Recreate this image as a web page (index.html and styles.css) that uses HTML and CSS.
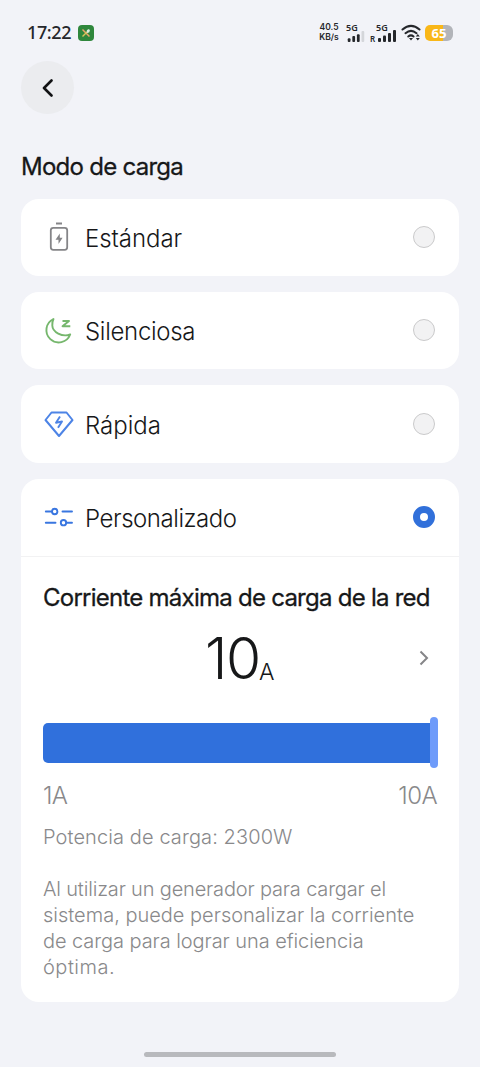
FILE: index.html
```html
<!DOCTYPE html>
<html lang="es">
<head>
<meta charset="utf-8">
<meta name="viewport" content="width=device-width, initial-scale=1">
<title>Modo de carga</title>
<link rel="stylesheet" href="styles.css">
</head>
<body>
<div class="screen">
  <header class="status">
    <span class="clock">17:22</span>
    <svg class="app-badge" viewBox="0 0 16 16"><rect width="16" height="16" rx="4" fill="#2f873c"/><path d="M4.5 4.5l7 7" stroke="#e9a36a" stroke-width="1.5"/><path d="M4.5 11.5L9 7" stroke="#d8c45a" stroke-width="1.5"/><path d="M8.5 7.5L9 5l2-1 .8 1.2-.4 2-2 .8z" fill="#dceee0"/></svg>
    <div class="speed"><span>40.5</span><span>KB/s</span></div>
    <div class="signal first"><span>5G</span><svg width="18" height="12" viewBox="0 0 18 12"><g fill="#25272b"><rect y="8" width="3" height="4" rx="1"/><rect x="5" y="5.500" width="3" height="6.500" rx="1"/><rect x="10" y="3.500" width="3" height="8.500" rx="1"/></g><rect x="15" width="3" height="12" rx="1" fill="#d4d6da"/></svg></div>
    <div class="signal second"><span>5G</span><div class="roam"><b>R</b><svg width="18" height="12" viewBox="0 0 18 12"><g fill="#25272b"><rect y="8" width="3" height="4" rx="1"/><rect x="5" y="5.500" width="3" height="6.500" rx="1"/><rect x="10" y="3" width="3" height="9" rx="1"/><rect x="15" width="3" height="12" rx="1"/></g></svg></div></div>
    <svg class="wifi" viewBox="0 0 20 18"><g fill="none" stroke="#25272b" stroke-width="2" stroke-linecap="round"><path d="M1.500 5.500Q10-1.800 18.500 5.500M4.500 9.200Q10 4.600 15.500 9.200M7.300 12.500Q10 10.200 12.500 12.500"/></g><path d="M8 14h4l-2 2.500zM14.800 12.500l2-2.500 2 2.500zM14.800 14l2 2.500 2-2.500z" fill="#25272b"/></svg>
    <div class="battery">65</div>
  </header>
  <button class="back" aria-label="Atrás"><svg width="12" height="18" viewBox="0 0 12 18"><path d="M9.500 1.500L2 9l7.500 7.500" fill="none" stroke="#111214" stroke-width="2.600" stroke-linecap="round" stroke-linejoin="round"/></svg></button>
  <h1 class="title">Modo de carga</h1>
  <main class="options">
    <section class="card"><div class="option">
      <svg class="icon" viewBox="0 0 30 30" fill="none" stroke="#858588"><path d="M12 1.500h6" stroke-width="2"/><rect x="6.800" y="5.800" width="16.400" height="22" rx="2.500" stroke-width="1.800"/><path d="M15.800 11.500l-4.300 6.200h3v4.300l4.100-6.200h-2.800z" fill="#858588" stroke="none"/></svg>
      <span class="label standard">Estándar</span><i class="radio"></i></div></section>
    <section class="card"><div class="option">
      <svg class="icon" viewBox="0 0 30 30" fill="none" stroke="#76b76d" stroke-width="1.900" stroke-linejoin="round"><path d="M9.500 4A12.300 12.300 0 1 0 26.200 19.500C18 22.500 8.500 17 8.300 10.500Q8 7 9.500 4Z"/><path d="M18.500 6h6.500l-6.500 5.200h7.800"/></svg>
      <span class="label silent">Silenciosa</span><i class="radio"></i></div></section>
    <section class="card"><div class="option">
      <svg class="icon" viewBox="0 0 30 30" fill="none" stroke="#4d84e6" stroke-width="2" stroke-linejoin="round"><path d="M7.500 3.500H22.500L28.500 11 15 27 1.500 11z"/><path d="M16 7.500l-4 6.200 6-1.200-4 6.200" stroke-width="1.900"/></svg>
      <span class="label fast">Rápida</span><i class="radio"></i></div></section>
    <section class="card custom">
      <div class="option">
      <svg class="icon" viewBox="0 0 30 30" fill="none" stroke="#3976e0" stroke-width="1.900" stroke-linecap="round"><path d="M1.800 9.500H8M18.500 9.500H28M1.800 20.700H11.500M22.300 20.700H28"/><circle cx="10.700" cy="9.500" r="2.700"/><circle cx="19.500" cy="20.700" r="2.700"/></svg>
      <span class="label personal">Personalizado</span><i class="radio selected"></i></div>
      <div class="details">
        <h2 class="subtitle">Corriente máxima de carga de la red</h2>
        <div class="value"><span class="number">10</span><span class="unit">A</span><svg class="chevron" viewBox="0 0 10 16"><path d="M1.500 1.500L8 8l-6.500 6.500" fill="none" stroke="#858588" stroke-width="2"/></svg></div>
        <div class="slider"><i class="fill"></i><i class="thumb"></i></div>
        <div class="range"><span>1A</span><span>10A</span></div>
        <p class="power">Potencia de carga: 2300W</p>
        <p class="note"><span class="line-a">Al utilizar un generador para cargar el</span><span>sistema, puede personalizar la corriente</span><span class="line-c">de carga para lograr una eficiencia</span><span class="line-d">óptima.</span></p>
      </div>
    </section>
  </main>
  <div class="home"></div>
</div>
</body>
</html>
```
FILE: styles.css
```css
* { box-sizing: border-box; }
body { margin: 0; background: #f2f3f8; color: #171819; font-family: Inter, "Open Sans", sans-serif; }
.screen { display: flex; flex-direction: column; width: 480px; height: 1067px; padding: 0 21px; overflow: hidden; }
.status { display: flex; align-items: center; height: 61px; padding: 4px 0 0 6px; color: #25272b; font-family: "Noto Sans", sans-serif; flex: none; }
.clock { font-size: 18px; font-weight: 500; width: 51px; letter-spacing: -.4px; margin-top: -1px; }
.app-badge { width: 16px; height: 16px; }
.speed { display: flex; flex-direction: column; gap: 1px; width: 22px; margin-left: 224px; font-family: Inter, sans-serif; font-size: 8.500px; line-height: 9px; font-weight: 600; text-align: center; white-space: nowrap; }
.signal { display: flex; flex-direction: column; font-size: 9px; line-height: 8px; font-weight: 600; height: 18px; }
.signal svg { display: block; margin-top: -2px; }
.first { width: 18px; margin-left: 7px; }
.first > span { margin-left: -1px; }
.first svg { margin-top: -1px; }
.second { width: 27px; margin-left: 5px; }
.second > span { margin-left: 6px; }
.roam { display: flex; align-items: end; gap: 1px; height: 11px; }
.roam b { font-size: 8px; line-height: 7px; width: 7px; font-weight: 600; }
.wifi { width: 20px; height: 18px; margin-left: 4px; }
.battery { width: 28px; height: 16px; margin-left: 4px; border-radius: 5px 6px 6px 5px; background: linear-gradient(90deg, #f9b718 65%, #b2b4b9 65%); color: white; font-size: 13px; line-height: 16px; font-weight: 700; text-align: center; }
.back { display: flex; align-items: center; justify-content: center; width: 53px; height: 53px; border: 0; border-radius: 50%; background: #ebecef; padding: 0; flex: none; margin: 0 0 1px .400px; }
.title { margin: 37px 0 0; height: 46.500px; line-height: 30px; font-size: 24px; font-weight: 400; -webkit-text-stroke: .3px #171819; letter-spacing: -.73px; }
.options { display: flex; flex-direction: column; gap: 16px; }
.card { height: 77.400px; border-radius: 18px; background: #fff; width: 438px; flex: none; }
.custom { height: 523px; }
.option { display: flex; align-items: center; height: 77px; padding: 0 24px 0 22px; }
.icon { width: 30px; height: 30px; flex: none; margin-left: .500px; }
.label { margin: 4px 0 0 11.500px; font-size: 24px; line-height: 30px; font-weight: 300; flex: 1; }
.standard { letter-spacing: -.05px; }
.silent { letter-spacing: -.3px; }
.fast { letter-spacing: 0; }
.personal { letter-spacing: -.45px; }
.radio { width: 22px; height: 22px; border: 1.500px solid #cacacb; border-radius: 50%; background: #f2f2f3; }
.selected { border: 7px solid #3170da; background: white; }
.details { border-top: 1px solid #f2f2f3; padding: 26px 22px 0; }
.subtitle { margin: 0; line-height: 30px; font-size: 24px; font-weight: 400; -webkit-text-stroke: .3px #171819; letter-spacing: -.75px; white-space: nowrap; }
.value { display: grid; grid-template-columns: 54px 15px 1fr 18px; align-items: end; height: 76px; padding: 0 0 0 162px; }
.number { font-size: 57px; line-height: 60px; font-weight: 300; letter-spacing: -1.500px; }
.unit { font-size: 23px; line-height: 34px; font-weight: 300; }
.chevron { grid-column: 4; width: 10px; height: 16px; margin-bottom: 23px; }
.slider { display: flex; align-items: center; height: 52px; margin-top: 28px; width: 394.500px; }
.fill { flex: 1; height: 40px; border-radius: 5px 0 0 5px; background: #3070dc; }
.thumb { width: 8px; height: 51px; border-radius: 5px; background: #6e9bfa; }
.range { display: flex; justify-content: space-between; width: 394px; margin-top: 12px; line-height: 30px; font-size: 24px; font-weight: 300; letter-spacing: -.6px; color: #89898b; }
.power, .note { margin: 0; font-size: 20px; font-weight: 300; color: #89898b; letter-spacing: 0; }
.power { margin-top: 13px; line-height: 26px; letter-spacing: .1px; }
.note { display: flex; flex-direction: column; margin-top: 26px; line-height: 26px; white-space: nowrap; }
.line-a { letter-spacing: -.17px; }
.line-c { letter-spacing: -.07px; }
.line-d { letter-spacing: .5px; }
.home { width: 192px; height: 5px; margin: 50px auto 0; border-radius: 3px; background: #b8b9bd; flex: none; }
```
